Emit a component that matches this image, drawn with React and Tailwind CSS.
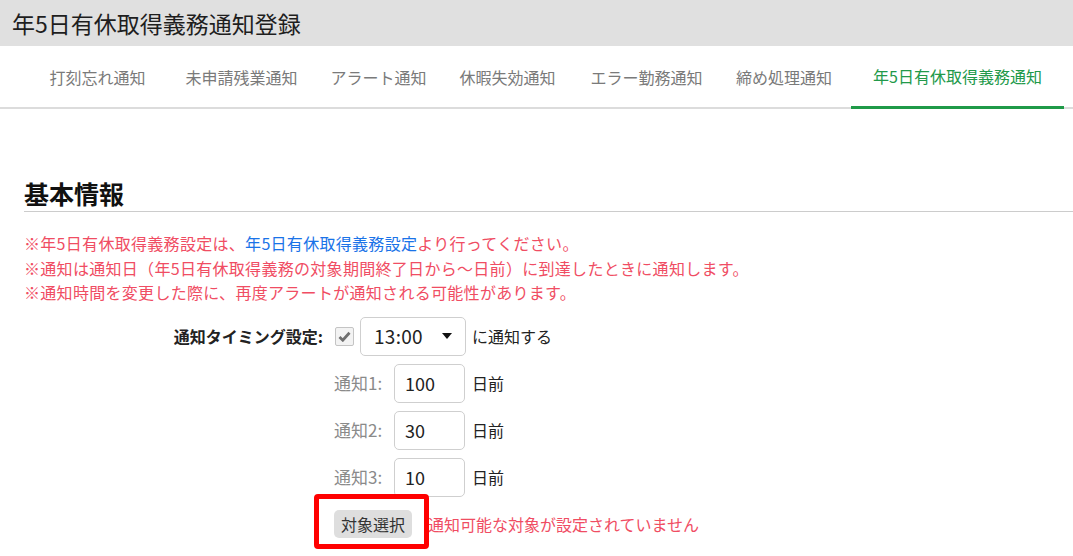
const tabs = [
  { label: '打刻忘れ通知', w: 'w-[135px]' },
  { label: '未申請残業通知', w: 'w-[153px]' },
  { label: 'アラート通知', w: 'w-[121px]' },
  { label: '休暇失効通知', w: 'w-[137px]' },
  { label: 'エラー勤務通知', w: 'w-[141px]' },
  { label: '締め処理通知', w: 'w-[134px]' },
  { label: '年5日有休取得義務通知', w: 'w-[213px]', active: true },
];

const days = [
  { label: '通知1:', value: '100' },
  { label: '通知2:', value: '30' },
  { label: '通知3:', value: '10' },
];

function Checkbox() {
  return (
    <div className="w-[19px] h-[19px] border border-[#c4c4c4] rounded-[2px] bg-[#f3f3f3] flex items-center justify-center">
      <svg width="13" height="11" viewBox="0 0 13 11">
        <path d="M1.5 6 L4.8 9.2 L11.5 1.8" fill="none" stroke="#6f6f6f" strokeWidth="2.8" />
      </svg>
    </div>
  );
}

function TimeSelect() {
  return (
    <div className="w-[106px] h-[39px] border border-[#cfcfcf] rounded-[5px] bg-white flex items-center pl-[13px] pr-[13px] justify-between">
      <span className="text-[19px] text-[#222] tracking-[0.3px]">13:00</span>
      <svg width="10" height="6" viewBox="0 0 10 6">
        <path d="M0 0 H10 L5 6 Z" fill="#111" />
      </svg>
    </div>
  );
}

export default function App() {
  return (
    <div className="w-[1073px] h-[556px] bg-white overflow-hidden font-['Noto_Sans_CJK_JP','Noto_Sans',sans-serif]">
      <header className="h-[46px] bg-[#e0e0e0] flex items-center pl-[12px]">
        <h1 className="text-[23px] leading-none text-[#1e1e1e]">年5日有休取得義務通知登録</h1>
      </header>

      <nav className="h-[63px] border-b-2 border-[#dcdcdc] flex pl-[30px]">
        {tabs.map((t) => (
          <div
            key={t.label}
            className={
              t.w +
              ' h-[63px] -mb-[2px] flex items-center justify-center text-[16px] pb-[2px] ' +
              (t.active ? 'text-[#22994a] border-b-[3px] border-[#1f9a48] pt-[1px]' : 'text-[#7a7a7a]')
            }
          >
            {t.label}
          </div>
        ))}
      </nav>

      <main className="px-[24px]">
        <h2 className="mt-[68px] text-[25px] leading-[32px] font-bold text-[#111] pb-[2px] border-b border-[#cccccc] -mr-[24px]">
          基本情報
        </h2>

        <div className="mt-[19px] text-[16px] leading-[24.5px] tracking-[0.3px] text-[#f04d63]">
          <p>
            ※年5日有休取得義務設定は、<span className="text-[#1a73e8]">年5日有休取得義務設定</span>より行ってください。
          </p>
          <p>※通知は通知日（年5日有休取得義務の対象期間終了日から～日前）に到達したときに通知します。</p>
          <p>※通知時間を変更した際に、再度アラートが通知される可能性があります。</p>
        </div>

        <div className="mt-[12px] flex items-center">
          <div className="w-[299px] text-right text-[16px] font-bold text-[#222]">通知タイミング設定:</div>
          <div className="ml-[12px] flex items-center gap-[6px]">
            <Checkbox />
            <TimeSelect />
            <span className="text-[16px] text-[#222]">に通知する</span>
          </div>
        </div>

        <div className="ml-[310px] flex flex-col gap-[8px] mt-[8px]">
          {days.map((d) => (
            <div key={d.label} className="flex items-center">
              <span className="w-[60px] text-[17px] text-[#8a8a8a]">{d.label}</span>
              <div className="w-[71px] h-[39px] border border-[#cfcfcf] rounded-[5px] flex items-center pl-[10px] text-[18px] text-[#222]">
                {d.value}
              </div>
              <span className="ml-[7px] text-[16px] text-[#222]">日前</span>
            </div>
          ))}

          <div className="flex items-center mt-[5px]">
            <div className="relative">
              <button className="w-[78px] h-[28px] bg-[#dedede] rounded-[5px] text-[16px] text-[#333] flex items-center justify-center">
                対象選択
              </button>
              <div className="absolute left-[-20px] top-[-16px] w-[115px] h-[55px] border-[5px] border-[#ff0000] rounded-[4px] pointer-events-none" />
            </div>
            <span className="ml-[16px] text-[16px] text-[#f04d63]">通知可能な対象が設定されていません</span>
          </div>
        </div>
      </main>
    </div>
  );
}
